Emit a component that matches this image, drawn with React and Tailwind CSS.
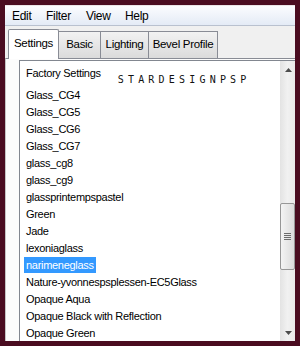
import React from "react";

const menus = [
  { label: "Edit", w: "w-[34px]" },
  { label: "Filter", w: "w-[40px]" },
  { label: "View", w: "w-[39px]" },
  { label: "Help", w: "w-[30px]" },
];

const tabs = [
  { label: "Basic", w: "w-[42px]" },
  { label: "Lighting", w: "w-[48px]" },
  { label: "Bevel Profile", w: "w-[69px]" },
];

const items = [
  "Glass_CG4",
  "Glass_CG5",
  "Glass_CG6",
  "Glass_CG7",
  "glass_cg8",
  "glass_cg9",
  "glassprintempspastel",
  "Green",
  "Jade",
  "lexoniaglass",
  "narimeneglass",
  "Nature-yvonnespsplessen-EC5Glass",
  "Opaque Aqua",
  "Opaque Black with Reflection",
  "Opaque Green",
];

const selected = "narimeneglass";

const Arrow = ({ down }) => (
  <svg width="7" height="4" viewBox="0 0 7 4" className="block">
    {down ? (
      <path d="M0 0 H7 L3.5 4 Z" fill="#4d4d4d" />
    ) : (
      <path d="M0 4 H7 L3.5 0 Z" fill="#4d4d4d" />
    )}
  </svg>
);

const App = () => {
  return (
    <div className="w-[300px] h-[346px] bg-[#4a0c20] p-[5px] font-['Liberation_Sans',Arial,sans-serif] text-[11.5px] tracking-[-0.3px] text-black">
      <div className="h-full flex flex-col overflow-hidden bg-[#f0f0f0]">
        {/* menu bar */}
        <div className="h-[21px] shrink-0 flex items-center pl-[7px] text-[12px] bg-gradient-to-b from-[#fbfcfe] to-[#e4ebf6] border-t border-[#e9e4e6] border-b border-b-[#b9c1cf]">
          {menus.map((m) => (
            <span key={m.label} className={`${m.w} leading-none`}>
              {m.label}
            </span>
          ))}
        </div>

        {/* tabs */}
        <div className="h-[32px] shrink-0 flex items-end pl-[3px]">
          <div className="relative z-10 -mb-px h-[30px] w-[51px] flex items-center justify-center bg-white border border-b-0 border-[#898c95] rounded-t-[2px] pb-[2px]">
            Settings
          </div>
          {tabs.map((t) => (
            <div
              key={t.label}
              className={`${t.w} h-[27px] flex items-center justify-center bg-gradient-to-b from-[#f2f2f2] to-[#dbdbdb] border border-l-0 border-b-0 border-[#898c95]`}
            >
              {t.label}
            </div>
          ))}
        </div>

        {/* tab panel */}
        <div className="flex-1 min-h-0 flex flex-col bg-[#fcfcfc] border-t border-l border-[#898c95] border-l-[#c4c4c4] pl-[13px] pt-px">
          <div className="flex-1 min-h-0 flex bg-white border-t border-l border-[#828790] text-[11px]">
            {/* list */}
            <div className="flex-1 min-w-0 overflow-hidden">
              <div className="h-[25px] flex items-start">
                <span className="pl-[6px] pt-[4px] leading-[17px] whitespace-nowrap">Factory Settings</span>
                <span className="ml-[17px] mt-[14px] font-['DejaVu_Sans_Mono',monospace] text-[10px] tracking-[4.2px] leading-[10px] text-[#111]">
                  STARDESIGNPSP
                </span>
              </div>
              {items.map((it) => (
                <div key={it} className="h-[17px] pl-[4px] flex items-center">
                  <span
                    className={`px-[2px] leading-[16px] whitespace-nowrap ${
                      it === selected ? "bg-[#3399ff] text-white" : ""
                    }`}
                  >
                    {it}
                  </span>
                </div>
              ))}
            </div>

            {/* scrollbar */}
            <div className="w-[15px] shrink-0 flex flex-col bg-gradient-to-r from-[#e3e3e3] via-[#f1f1f1] to-[#e9e9e9]">
              <div className="h-[17px] shrink-0 flex items-center justify-center pl-px">
                <Arrow />
              </div>
              <div className="h-[125px] shrink-0" />
              <div className="h-[67px] shrink-0 flex flex-col items-center justify-center gap-[1px] bg-gradient-to-r from-[#f4f4f4] to-[#dcdcdc] border border-[#979797] rounded-[2px]">
                <div className="w-[7px] h-px bg-[#6d6d6d]" />
                <div className="w-[7px] h-px bg-[#6d6d6d]" />
                <div className="w-[7px] h-px bg-[#6d6d6d]" />
                <div className="w-[7px] h-px bg-[#6d6d6d]" />
              </div>
              <div className="h-[54px] shrink-0" />
              <div className="h-[17px] shrink-0 flex items-center justify-center pl-px">
                <Arrow down />
              </div>
            </div>
          </div>
        </div>
      </div>
    </div>
  );
};

export default App;
